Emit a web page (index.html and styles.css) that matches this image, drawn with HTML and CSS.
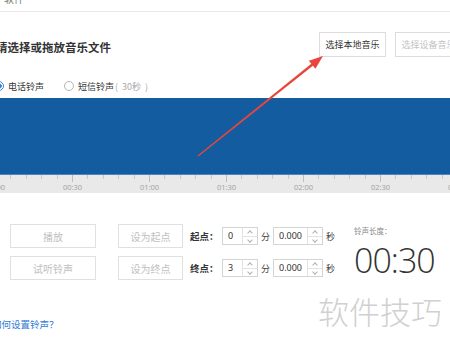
FILE: index.html
```html
<!DOCTYPE html>
<html>
<head>
  <title>设置铃声</title>
  <link rel="stylesheet" href="styles.css">
</head>
<body>
  <div class="top"><span>软件</span></div>

  <div class="head">
    <h1 class="title">请选择或拖放音乐文件</h1>
    <button class="pick">选择本地音乐</button>
    <button class="pick off">选择设备音乐</button>
  </div>

  <div class="radios">
    <span class="radio on"></span><span class="rtxt">电话铃声</span>
    <span class="radio second"></span><span class="rtxt">短信铃声</span><span class="hint">( 30秒 )</span>
  </div>

  <div class="wave"></div>
  <div class="ruler">
    <div class="marks">
      <span>00:00</span><span>00:30</span><span>01:00</span><span>01:30</span><span>02:00</span><span>02:30</span><span>03:00</span>
    </div>
  </div>

  <div class="controls">
    <div class="rows">
      <div class="row">
        <button class="btn">播放</button>
        <button class="btn set">设为起点</button>
        <span class="lbl">起点：</span>
        <div class="spin"><span class="val">0</span><span class="arr"><i class="up"></i><i class="down"></i></span></div>
        <span class="unit">分</span>
        <div class="spin wide"><span class="val">0.000</span><span class="arr"><i class="up"></i><i class="down"></i></span></div>
        <span class="unit">秒</span>
      </div>
      <div class="row">
        <button class="btn">试听铃声</button>
        <button class="btn set">设为终点</button>
        <span class="lbl">终点：</span>
        <div class="spin"><span class="val">3</span><span class="arr"><i class="up"></i><i class="down"></i></span></div>
        <span class="unit">分</span>
        <div class="spin wide"><span class="val">0.000</span><span class="arr"><i class="up"></i><i class="down"></i></span></div>
        <span class="unit">秒</span>
      </div>
    </div>
    <div class="length">
      <div class="len-lbl">铃声长度：</div>
      <div class="len-val">00:30</div>
    </div>
  </div>

  <a class="help" href="#">如何设置铃声？</a>

  <!-- 水印和箭头盖在界面上面 -->
  <div class="mark">软件技巧</div>
  <svg class="arrow" width="450" height="345" viewBox="0 0 450 345">
    <polygon fill="#e8463d" points="197.6,155.6 311.3,63.8 308.8,60.7 323,56 315.4,68.8 312.9,65.7 198.4,156.4"/>
  </svg>
</body>
</html>
```

FILE: styles.css
```css
body {
  margin: 0;
  width: 450px;
  height: 345px;
  overflow: hidden;
  position: relative;
  background: #fff;
  color: #333;
  font-family: "Noto Sans CJK SC", "Noto Sans", sans-serif;
}

.top {
  height: 11px;
  border-bottom: 1px solid #e8e8e8;
  overflow: hidden;
}

.top span {
  display: block;
  margin-top: -9px;
  padding-left: 4px;
  font-size: 10px;
  color: #777;
}

.head {
  display: flex;
  align-items: center;
  margin-top: 20px;
  height: 25px;
}

.title {
  margin: 0 auto 0 -4px;
  font-size: 11.5px;
  font-weight: 600;
  color: #333;
  padding-top: 4px;
}

.pick {
  flex-shrink: 0;
  width: 67px;
  height: 25px;
  margin-left: 9px;
  background: #fff;
  border: 1px solid #dcdcdc;
  font-family: inherit;
  font-size: 9px;
  color: #333;
  padding: 0;
}

.pick.off {
  color: #c4c4c4;
  margin-right: -12px;
}

.radios {
  display: flex;
  align-items: center;
  margin-top: 23px;
  height: 12px;
  font-size: 9px;
}

.radio {
  width: 10px;
  height: 10px;
  box-sizing: border-box;
  border: 1px solid #b5b5b5;
  border-radius: 50%;
  margin-left: -6px;
}

.radio.on {
  border-color: #3a83d6;
  background: radial-gradient(circle, #3a83d6 0 2.5px, #fff 3px);
}

.radio.second {
  margin-left: 20px;
}

.rtxt {
  margin-left: 4px;
  color: #333;
}

.hint {
  color: #aaa;
  margin-left: 1px;
  word-spacing: 2px;
}

.wave {
  margin-top: 6px;
  height: 76px;
  background: #125c9f;
  border-bottom: 1px solid #4a86c0;
}

.ruler {
  height: 18px;
  background-color: #e9e9e9;
  background-image:
    repeating-linear-gradient(to right, #bdbdbd 0 1px, transparent 1px 77px),
    repeating-linear-gradient(to right, #c8c8c8 0 1px, transparent 1px 15.4px);
  background-size: 100% 7px, 100% 4px;
  background-position: -5px 0, -5px 0;
  background-repeat: no-repeat;
  overflow: hidden;
}

.marks {
  display: flex;
  margin-left: -43px;
  padding-top: 7px;
}

.marks span {
  flex: 0 0 77px;
  text-align: center;
  font-family: "Open Sans", sans-serif;
  font-size: 7.5px;
  color: #a0a0a0;
  line-height: 10px;
}

.controls {
  display: flex;
  margin-top: 31px;
  padding-left: 10px;
}

.rows {
  display: flex;
  flex-direction: column;
  gap: 8px;
}

.row {
  display: flex;
  align-items: center;
  height: 24px;
}

.btn {
  width: 86px;
  height: 24px;
  padding: 0;
  background: #fff;
  border: 1px solid #e0e0e0;
  font-family: inherit;
  font-size: 10px;
  color: #c0c0c0;
}

.btn.set {
  width: 65px;
  margin-left: 22px;
}

.lbl {
  width: 32px;
  margin-left: 7px;
  font-size: 9.5px;
  font-weight: 600;
  color: #333;
}

.spin {
  display: flex;
  width: 36px;
  height: 18px;
  box-sizing: border-box;
  border: 1px solid #d4d4d4;
}

.spin.wide {
  width: 50px;
}

.val {
  flex: 1;
  padding-left: 5px;
  font-family: "Noto Sans", sans-serif;
  font-size: 9px;
  line-height: 16px;
  color: #333;
}

.arr {
  width: 14px;
  display: flex;
  flex-direction: column;
  border-left: 1px solid #e2e2e2;
}

.arr i {
  flex: 1;
  position: relative;
}

.arr i.down {
  border-top: 1px solid #e2e2e2;
}

.arr i::after {
  content: "";
  position: absolute;
  left: 5px;
  width: 3px;
  height: 3px;
  border-left: 1px solid #b0b0b0;
  border-top: 1px solid #b0b0b0;
}

.arr i.up::after {
  top: 3px;
  transform: rotate(45deg);
}

.arr i.down::after {
  top: 1px;
  transform: rotate(225deg);
}

.unit {
  width: 15px;
  text-align: center;
  font-size: 9px;
  color: #444;
}

.length {
  margin-left: 16px;
  padding-top: 1px;
}

.len-lbl {
  font-size: 7.5px;
  line-height: 11px;
  color: #888;
}

.len-val {
  margin-top: 7px;
  font-family: "Open Sans", sans-serif;
  font-weight: 300;
  font-size: 34px;
  letter-spacing: -1px;
  line-height: 34px;
  color: #333;
}

.help {
  display: block;
  margin-top: 37px;
  margin-left: -8px;
  font-size: 9.5px;
  color: #2f7bd6;
  text-decoration: none;
}

.mark {
  position: absolute;
  left: 318px;
  top: 288px;
  font-size: 31px;
  font-weight: 300;
  color: #d0d0d0;
}

.arrow {
  position: absolute;
  left: 0;
  top: 0;
  pointer-events: none;
}
```
